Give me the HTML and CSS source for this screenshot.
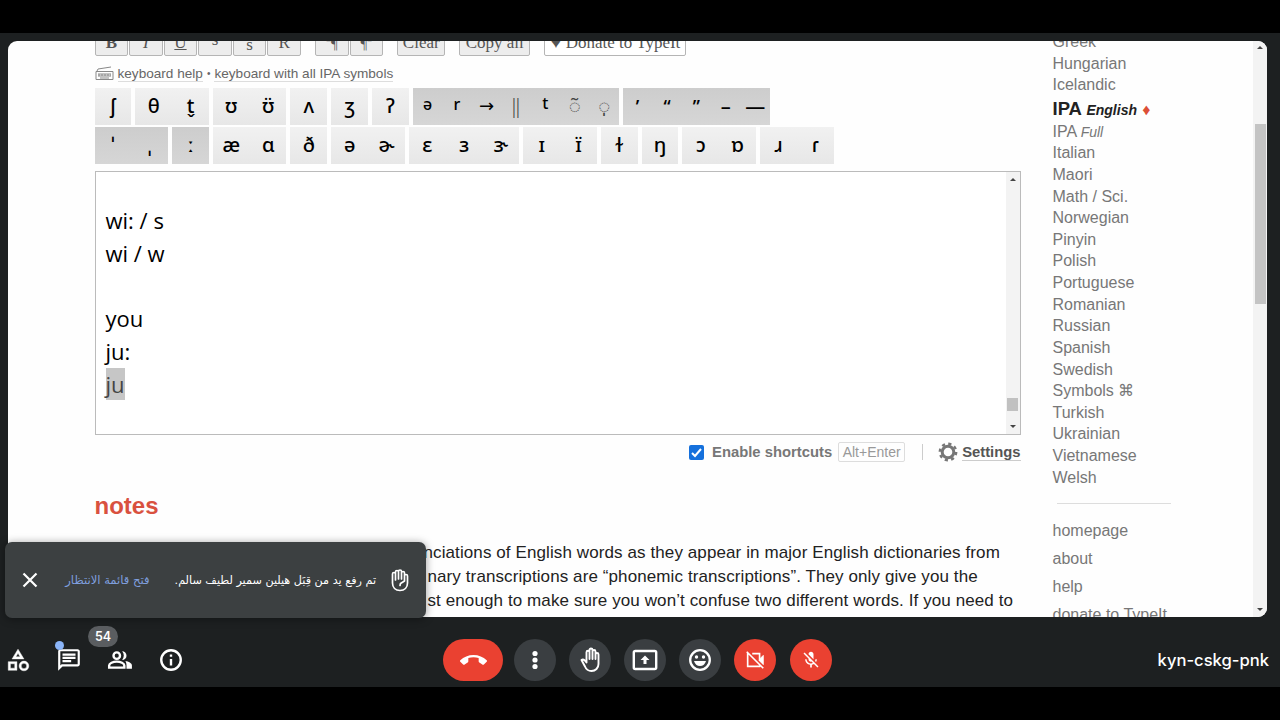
FILE: index.html
```html
<!DOCTYPE html>
<html lang="en">
<head>
    <meta charset="UTF-8">
    <meta name="viewport" content="width=device-width, initial-scale=1.0">
    <title>kyn-cskg-pnk</title>
    <link rel="stylesheet" href="styles.css">
</head>
<body>
    <div class="meeting">
        <div class="shared">
            <main class="page">
                <div class="toolbar">
                    <div class="btn-group">
                        <button><b>B</b></button><button><i>I</i></button><button><u>U</u></button><button class="sup">s</button><button class="sub">s</button><button>R</button>
                    </div>
                    <div class="btn-group marks">
                        <button>⁼¶</button><button>¶⁼</button>
                    </div>
                    <button class="clear">Clear</button>
                    <button class="copy">Copy all</button>
                    <button class="donate"><span class="heart">♥</span> Donate to TypeIt</button>
                </div>

                <div class="help">
                    <svg width="19" height="15" viewBox="0 0 19 15" fill="none" stroke="#888">
                        <path d="M1 5.5h17v8H1zM2 5l1-2 13-2M3 8h13M3 10h13M5 12h9" />
                        <path d="M3 9h13" stroke-dasharray="2 1" />
                    </svg>
                    <a>keyboard help</a><span class="dot">•</span><a>keyboard with all IPA symbols</a>
                </div>

                <div class="keys">
                    <div class="group"><span>ʃ</span></div>
                    <div class="group"><span>θ</span><span>t̬</span></div>
                    <div class="group"><span>ʊ</span><span>ʊ̈</span></div>
                    <div class="group"><span>ʌ</span></div>
                    <div class="group"><span>ʒ</span></div>
                    <div class="group"><span>ʔ</span></div>
                    <div class="group dark narrow"><span class="small">ə</span><span class="small">r</span><span class="arrow">→</span><span class="bars">‖</span><span class="small raised">t</span><span class="mark">◌̃</span><span class="mark">◌̩</span></div>
                    <div class="group dark narrow"><span class="quote">’</span><span class="quote">“</span><span class="quote">”</span><span>–</span><span>—</span></div>
                </div>
                <div class="keys">
                    <div class="group dark"><span>ˈ</span><span>ˌ</span></div>
                    <div class="group dark"><span class="long">ː</span></div>
                    <div class="group"><span>æ</span><span>ɑ</span></div>
                    <div class="group"><span>ð</span></div>
                    <div class="group"><span>ə</span><span>ɚ</span></div>
                    <div class="group"><span>ɛ</span><span>ɜ</span><span>ɝ</span></div>
                    <div class="group"><span>ɪ</span><span>ɪ̈</span></div>
                    <div class="group"><span>ɫ</span></div>
                    <div class="group"><span>ŋ</span></div>
                    <div class="group"><span>ɔ</span><span>ɒ</span></div>
                    <div class="group"><span>ɹ</span><span>ɾ</span></div>
                </div>

                <div class="editor">
                    <div class="text">
                        <p>wi: / s</p>
                        <p>wi / w</p>
                        <p>&nbsp;</p>
                        <p>you</p>
                        <p>ju:</p>
                        <p><mark>ju</mark></p>
                    </div>
                    <div class="scroll">
                        <i class="up"></i>
                        <div class="thumb"></div>
                        <i class="down"></i>
                    </div>
                </div>

                <div class="options">
                    <svg class="check" width="15" height="15" viewBox="0 0 15 15">
                        <rect width="15" height="15" rx="2" fill="#1570dc" />
                        <path d="M3 8l3 3 6-7" fill="none" stroke="#fff" stroke-width="2" />
                    </svg>
                    <b>Enable shortcuts</b>
                    <kbd>Alt+Enter</kbd>
                    <span class="sep"></span>
                    <svg class="gear" width="20" height="20" viewBox="0 0 20 20" fill="none" stroke="#777">
                        <circle cx="10" cy="10" r="5.8" stroke-width="3" />
                        <circle cx="10" cy="10" r="8.2" stroke-width="2.4" stroke-dasharray="3.2 3.24" />
                    </svg>
                    <b class="settings">Settings</b>
                </div>

                <h2>notes</h2>
                <div class="notes">
                    <p class="first">nciations of English words as they appear in major English dictionaries from</p>
                    <p>nary transcriptions are “phonemic transcriptions”. They only give you the</p>
                    <p>st enough to make sure you won’t confuse two different words. If you need to</p>
                </div>
            </main>

            <aside class="sidebar">
                <ul class="langs">
                    <li>Greek</li>
                    <li>Hungarian</li>
                    <li>Icelandic</li>
                    <li class="current">IPA <em>English</em> <span>♦</span></li>
                    <li>IPA <em>Full</em></li>
                    <li>Italian</li>
                    <li>Maori</li>
                    <li>Math / Sci.</li>
                    <li>Norwegian</li>
                    <li>Pinyin</li>
                    <li>Polish</li>
                    <li>Portuguese</li>
                    <li>Romanian</li>
                    <li>Russian</li>
                    <li>Spanish</li>
                    <li>Swedish</li>
                    <li>Symbols ⌘</li>
                    <li>Turkish</li>
                    <li>Ukrainian</li>
                    <li>Vietnamese</li>
                    <li>Welsh</li>
                </ul>
                <hr>
                <ul class="links">
                    <li>homepage</li>
                    <li>about</li>
                    <li>help</li>
                    <li>donate to TypeIt</li>
                </ul>
            </aside>

            <div class="page-scroll">
                <i class="up"></i>
                <div class="thumb"></div>
                <i class="down"></i>
            </div>
        </div>

        <div class="toast" dir="rtl" lang="ar">
            <svg width="18" height="23" viewBox="0 0 18 23" fill="none" stroke="#fff" stroke-width="1.700" stroke-linecap="round" stroke-linejoin="round">
                <path d="M4.500 11V5a1.500 1.500 0 0 0-3 0v9c0 4.500 3 7.500 7.500 7.500s7.500-3 7.500-7.500V7a1.500 1.500 0 0 0-3 0v5l-4 2.500-.5 2M4.500 10V3a1.500 1.500 0 0 1 3 0v7M7.500 10V2.500a1.500 1.500 0 0 1 3 0V10M10.500 10V4a1.500 1.500 0 0 1 3 0v7" />
            </svg>
            <span class="message">تم رفع يد من قِبَل هيلين سمير لطيف سالم.</span>
            <a class="action">فتح قائمة الانتظار</a>
            <svg class="close" width="16" height="16" viewBox="0 0 16 16" stroke="#fff" stroke-width="2.2">
                <path d="M1.500 1.500l13 13M14.500 1.500l-13 13" />
            </svg>
        </div>

        <footer class="bar">
            <div class="tools">
                <svg width="26" height="26" viewBox="0 0 24 24" fill="#fff" stroke="#fff" stroke-width=".4">
                    <path d="M12 2l-5.500 9h11L12 2zm0 3.840L13.930 9h-3.870L12 5.840zM17.500 13a4.500 4.500 0 1 0 0 9 4.500 4.500 0 0 0 0-9zm0 7a2.500 2.500 0 1 1 0-5 2.500 2.500 0 0 1 0 5zM3 21.500h8v-8H3v8zm2-6h4v4H5v-4z" />
                </svg>
                <div class="tool">
                    <svg width="26" height="26" viewBox="0 0 24 24" fill="#fff">
                        <path d="M4 4h16v12H5.170L4 17.170V4m0-2c-1.100 0-2 .9-2 2v18l4-4h14c1.100 0 2-.9 2-2V4c0-1.100-.9-2-2-2H4zm2 10h8v2H6v-2zm0-3h12v2H6V9zm0-3h12v2H6V6z" />
                    </svg>
                    <span class="unread"></span>
                </div>
                <div class="tool">
                    <svg width="26" height="26" viewBox="0 0 24 24" fill="none" stroke="#fff" stroke-width="2.200">
                        <circle cx="9" cy="8" r="3" />
                        <path d="M2 19v-2c0-2 3.500-3.500 7-3.500s7 1.500 7 3.500v2z" />
                        <path d="M14 4a4 4 0 1 1 0 8c2-2.500 2-5.500 0-8zM17 13c3 .5 6 2 6 4v3h-5v-3c0-1.500-.4-3-1-4z" fill="#fff" stroke="none" />
                    </svg>
                    <span class="count">54</span>
                </div>
                <svg width="26" height="26" viewBox="0 0 24 24" fill="none" stroke="#fff" stroke-width="2.200">
                    <circle cx="12" cy="12" r="9" />
                    <path d="M12 11v6M12 7v2" />
                </svg>
            </div>

            <div class="controls">
                <button class="round hangup">
                    <svg width="27" height="27" viewBox="0 0 24 24" fill="#fff">
                        <path d="M12 9c-1.600 0-3.150.25-4.600.72v3.100c0 .39-.23.74-.56.9-.98.49-1.870 1.120-2.660 1.850-.18.18-.43.28-.7.28-.28 0-.53-.11-.71-.29L.29 13.080C.11 12.910 0 12.660 0 12.380c0-.28.11-.53.29-.71C3.340 8.780 7.460 7 12 7s8.660 1.780 11.710 4.670c.18.18.29.43.29.71 0 .28-.11.53-.29.71l-2.480 2.480c-.18.18-.43.29-.71.29-.27 0-.52-.11-.7-.28-.79-.74-1.690-1.360-2.670-1.850-.33-.16-.56-.5-.56-.9v-3.100C15.150 9.250 13.600 9 12 9z" />
                    </svg>
                </button>
                <button class="round">
                    <svg width="26" height="26" viewBox="0 0 24 24" fill="#fff">
                        <circle cx="12" cy="6" r="2.400" /><circle cx="12" cy="12" r="2.400" /><circle cx="12" cy="18" r="2.400" />
                    </svg>
                </button>
                <button class="round hand">
                    <svg width="24" height="26" viewBox="0 0 24 26" fill="none" stroke="#fff" stroke-width="1.900" stroke-linejoin="round" stroke-linecap="round">
                        <path d="M8.500 12V5.200a1.500 1.500 0 0 1 3 0V12V3a1.500 1.500 0 0 1 3 0v9V4.500a1.500 1.500 0 0 1 3 0V12V7.500a1.500 1.500 0 0 1 3 0V17c0 4-3 7-7 7-3.500 0-5.500-2-6.500-4.500L3.500 13c1.300-1.200 2.500-.3 3.300.5l1.700 2z" />
                    </svg>
                </button>
                <button class="round">
                    <svg width="26" height="22" viewBox="0 0 26 22">
                        <rect x="1.800" y="2" width="22.400" height="18" rx="1.500" fill="none" stroke="#fff" stroke-width="2.400" />
                        <path d="M13 6.500l4.500 4.500H14.500v4h-3v-4H8.500z" fill="#fff" />
                    </svg>
                </button>
                <button class="round">
                    <svg width="24" height="24" viewBox="0 0 24 24" fill="#fff">
                        <circle cx="12" cy="12" r="9.800" fill="none" stroke="#fff" stroke-width="2.300" />
                        <circle cx="8.500" cy="9" r="1.700" /><circle cx="15.500" cy="9" r="1.700" />
                        <path d="M6 13h12c-.8 3-3 5-6 5s-5.200-2-6-5z" />
                    </svg>
                </button>
                <button class="round off">
                    <svg width="22" height="22" viewBox="0 0 24 24" fill="none" stroke="#fff" stroke-width="1.800">
                        <path d="M5 5H4v14h13v-1M9 5h8v8M3 3l18 18" />
                        <path d="M17 11l4-4v10l-4-4z" fill="#fff" stroke-width="1" />
                    </svg>
                </button>
                <button class="round off">
                    <svg width="20" height="20" viewBox="0 0 24 24" fill="#fff">
                        <path d="M19 11h-1.700c0 .74-.16 1.430-.43 2.050l1.230 1.230c.56-.98.9-2.090.9-3.280zm-4.020.17c0-.06.02-.11.02-.17V5c0-1.660-1.340-3-3-3S9 3.340 9 5v.18l5.980 5.990zM4.270 3L3 4.270l6.010 6.010V11c0 1.660 1.330 3 2.990 3 .22 0 .44-.03.65-.08l1.660 1.660c-.71.33-1.500.52-2.310.52-2.760 0-5.300-2.100-5.300-5.100H5c0 3.410 2.720 6.230 6 6.720V21h2v-3.280c.91-.13 1.770-.45 2.540-.9L19.730 21 21 19.730 4.270 3z" />
                    </svg>
                </button>
            </div>

            <div class="code">kyn-cskg-pnk</div>
        </footer>
    </div>
</body>
</html>
```
FILE: styles.css
```css
body {
    margin: 0;
    background: #000;
    font-family: "Liberation Sans", Arial, sans-serif;
    overflow: hidden;
}

p, h2, ul {
    margin: 0;
    padding: 0;
}

svg {
    display: block;
    flex-shrink: 0;
}

.meeting {
    position: relative;
    box-sizing: border-box;
    width: 1280px;
    height: 654px;
    margin-top: 33px;
    padding: 8px 13px 0 8px;
    background: #1d2021;
}

/* Shared browser tab */
.shared {
    display: flex;
    height: 576px;
    overflow: hidden;
    background: #fefefe;
    border-radius: 9px;
}

.page {
    width: 926px;
    margin-left: 86.500px;
    flex-shrink: 0;
}

.toolbar {
    display: flex;
    gap: 14px;
    height: 15px;
    align-items: flex-end;
}

.btn-group {
    display: flex;
    gap: 1px;
}

.toolbar button {
    box-sizing: border-box;
    width: 33.600px;
    height: 28px;
    padding: 2px 0 0;
    border: 1px solid #b5b5b5;
    border-radius: 2px;
    background: #ededed;
    color: #555;
    font: 17px "Liberation Serif", serif;
    white-space: nowrap;
}

.toolbar .sup {
    padding: 0 0 4px;
}

.toolbar .sub {
    padding-top: 6px;
}

.toolbar .marks button {
    font-size: 15px;
}

.toolbar .clear {
    width: 48px;
}

.toolbar .copy {
    width: 71px;
}

.toolbar .donate {
    width: 142px;
    background: #fff;
}

.heart {
    font-size: 19px;
    line-height: 10px;
}

.help {
    display: flex;
    align-items: center;
    height: 32px;
    padding-top: 3px;
    box-sizing: border-box;
    font-size: 13.600px;
    color: #666;
}

.help svg {
    margin-right: 4px;
}

.help a {
    border-bottom: 1px solid #ddd;
}

.dot {
    margin: 0 4px;
    font-size: 10px;
}

/* IPA keys */
.keys {
    display: flex;
    gap: 4px;
    height: 37px;
    margin-bottom: 2px;
    font: 500 20px "Noto Sans", "DejaVu Sans", sans-serif;
}

.group {
    display: flex;
    background: linear-gradient(#f1f1f1, #e7e7e7);
}

.group span {
    width: 36.800px;
    line-height: 36px;
    text-align: center;
}

.group.dark {
    background: linear-gradient(#cdcdcd, #d6d6d6);
}

.group.narrow span {
    width: 29.430px;
}

.group .small {
    font-size: 16px;
    line-height: 33px;
}

.group .raised {
    line-height: 31px;
}

.group .arrow {
    font: 18px/36px "DejaVu Sans", sans-serif;
}

.group .bars {
    font-weight: 300;
    color: #444;
}

.group .mark {
    font: 20px/36px "Noto Sans", sans-serif;
    color: #444;
}

.group .quote {
    font-size: 18px;
    font-family: "Open Sans", sans-serif;
    font-weight: 600;
}

.group .long {
    font-weight: bold;
}

/* Text area */
.editor {
    display: flex;
    justify-content: space-between;
    box-sizing: border-box;
    height: 264px;
    margin-top: 7px;
    border: 1px solid #bbb;
    background: #fff;
}

.text {
    padding: 32px 0 0 10px;
    font: 22px/32.800px "Open Sans", "Noto Sans", sans-serif;
}

.text p {
    height: 32.800px;
}

mark {
    display: inline-block;
    height: 32px;
    background: #c6c6c6;
    color: #444;
}

.scroll, .page-scroll {
    display: flex;
    flex-direction: column;
    align-items: center;
    width: 14px;
    background: #f3f3f3;
}

.scroll .thumb {
    width: 11px;
    height: 13px;
    margin-top: 217px;
    background: #c1c1c1;
}

.up, .down {
    width: 0;
    border: 3px solid transparent;
}

.up {
    margin-top: 6px;
    border-top: 0;
    border-bottom: 3px solid #444;
}

.down {
    margin: auto 0 6px;
    border-bottom: 0;
    border-top: 3px solid #444;
}

.options {
    display: flex;
    align-items: center;
    justify-content: flex-end;
    height: 34px;
    font-size: 14.800px;
    color: #777;
}

.check {
    margin-right: 8px;
}

kbd {
    box-sizing: border-box;
    width: 67px;
    margin-left: 6px;
    border: 1px solid #ddd;
    border-radius: 2px;
    font: 14px/18px "Liberation Sans", sans-serif;
    text-align: center;
    color: #999;
}

.sep {
    width: 1px;
    height: 16px;
    margin: 0 15px 0 17px;
    background: #ccc;
}

.gear {
    margin-right: 4px;
}

.settings {
    color: #555;
    border-bottom: 1px solid #ccc;
}

h2 {
    margin-top: 22px;
    font-size: 24px;
    line-height: 30px;
    color: #d9513f;
}

.notes {
    margin-top: 20px;
    padding-left: 333px;
    font-size: 17px;
    line-height: 24px;
    letter-spacing: 0.1px;
    color: #222;
    white-space: nowrap;
}

.notes .first {
    margin-left: -4px;
}

/* Language list */
.sidebar {
    width: 118px;
    margin-left: 32px;
    margin-top: -10px;
    font-size: 16px;
    color: #777;
    white-space: nowrap;
}

.sidebar ul {
    list-style: none;
}

.langs li {
    height: 21.620px;
    line-height: 21.620px;
}

.langs em {
    font-size: 14px;
}

.langs .current {
    height: 25px;
    line-height: 25px;
    font-size: 18.500px;
    font-weight: bold;
    color: #222;
}

.current span {
    font-size: 16px;
    line-height: 16px;
    color: #dc4f37;
}

.sidebar hr {
    height: 1px;
    margin: 15px 0 13px 4px;
    border: 0;
    background: #ddd;
}

.links li {
    height: 28px;
    line-height: 28px;
}

.page-scroll {
    margin-left: auto;
}

.page-scroll .up {
    margin-top: 5px;
}

.page-scroll .thumb {
    width: 11px;
    height: 180px;
    margin-top: 75px;
    background: #c4c4c4;
}

/* Raised hand notice */
.toast {
    position: absolute;
    left: 5px;
    top: 509px;
    display: flex;
    align-items: center;
    box-sizing: border-box;
    width: 421px;
    height: 76px;
    padding: 0 17px;
    border-radius: 7px;
    background: #3c4041;
    box-shadow: 0 1px 8px rgba(0, 0, 0, 0.4);
    color: #fff;
    font: 11.200px "DejaVu Sans", sans-serif;
    white-space: nowrap;
}

.message {
    margin-right: 15px;
}

.action {
    margin-right: 25px;
    color: #7f9fdf;
    font-size: 11.600px;
}

.close {
    margin-right: auto;
}

/* Call controls */
.bar {
    display: grid;
    grid-template-columns: 438px 1fr 400px;
    align-items: center;
    height: 86px;
    margin-right: -13px;
    margin-left: -8px;
}

.tools {
    display: flex;
    gap: 25px;
    padding-left: 5px;
}

.tool {
    position: relative;
}

.unread {
    position: absolute;
    left: -1px;
    top: -6px;
    width: 9px;
    height: 9px;
    border-radius: 50%;
    background: #8ab4f8;
}

.count {
    position: absolute;
    left: -19px;
    top: -21px;
    width: 30px;
    border-radius: 11px;
    background: #5a5d60;
    color: #fff;
    font: 600 12.500px/21px Inter, sans-serif;
    text-align: center;
}

.controls {
    display: flex;
    gap: 13.100px;
    padding-left: 5px;
}

.round {
    display: flex;
    align-items: center;
    justify-content: center;
    width: 42px;
    height: 42px;
    padding: 0;
    border: 0;
    border-radius: 21px;
    background: #3a3e41;
}

.hangup {
    width: 60px;
    margin-right: -2px;
    background: #ea4131;
}

.off {
    background: #ea4131;
}

.code {
    padding-right: 11px;
    text-align: right;
    color: #fff;
    font: 500 16.600px Inter, sans-serif;
}
```
